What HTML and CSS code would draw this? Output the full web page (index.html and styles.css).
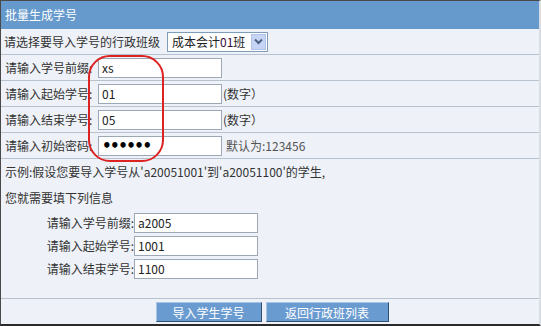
FILE: index.html
```html
<!DOCTYPE html>
<html lang="zh-CN">
<head>
    <meta charset="UTF-8">
    <title>批量生成学号</title>
    <link rel="stylesheet" href="styles.css">
</head>
<body>

    <div class="frame">
        <div class="title-bar">批量生成学号</div>
        <form id="batchForm">
            <div class="row">
                <label class="label-wide">请选择要导入学号的行政班级</label>
                <div class="fake-select">
                    <span class="fake-select-text">成本会计<span class="num">01</span>班</span>
                    <span class="fake-select-arrow">
                        <svg width="9" height="7" viewBox="0 0 9 7"><path d="M1 1.5 L4.5 5 L8 1.5" fill="none" stroke="#4d6185" stroke-width="2"/></svg>
                    </span>
                </div>
            </div>
            <div class="row">
                <label class="label" for="prefix">请输入学号前缀:</label>
                <input type="text" id="prefix" value="xs">
            </div>
            <div class="row">
                <label class="label" for="startNo">请输入起始学号:</label>
                <input type="text" id="startNo" class="num" value="01">
                <span class="hint">(数字）</span>
            </div>
            <div class="row">
                <label class="label" for="endNo">请输入结束学号:</label>
                <input type="text" id="endNo" class="num" value="05">
                <span class="hint">(数字）</span>
            </div>
            <div class="row">
                <label class="label" for="pwd">请输入初始密码:</label>
                <input type="password" id="pwd" value="123456">
                <span class="hint hint-gray">默认为:123456</span>
            </div>

            <div class="example">
                <p>示例:假设您要导入学号从'a20051001'到'a20051100'的学生,</p>
                <p>您就需要填下列信息</p>
                <div class="sample-grid">
                    <label>请输入学号前缀:</label>
                    <input type="text" value="a2005">
                    <label>请输入起始学号:</label>
                    <input type="text" class="num" value="1001">
                    <label>请输入结束学号:</label>
                    <input type="text" class="num" value="1100">
                </div>
            </div>

            <div class="button-row">
                <button type="submit" class="btn btn-import">导入学生学号</button>
                <button type="button" class="btn btn-back">返回行政班列表</button>
            </div>
        </form>

        <!-- 红色圈注 -->
        <div class="mark"></div>
    </div>

</body>
</html>
```

FILE: styles.css
```css
body {
    margin: 0;
    padding: 0;
    font-family: "Noto Sans CJK SC", "Noto Sans", sans-serif;
    font-size: 12px;
    color: #333;
    background-color: #f4f6f9;
}
.frame {
    position: relative;
    width: 541px;
    height: 326px;
    box-sizing: border-box;
    border-top: 1px solid #4a4a4a;
    border-left: 1px solid #4a4a4a;
    border-right: 2px solid #d8dde4;
    border-bottom: 2px solid #2a2a2a;
    background-color: #eef2f8;
    overflow: hidden;
}
.title-bar {
    height: 28px;
    line-height: 27px;
    padding-left: 4px;
    background-color: #6699cc;
    color: #fff;
    font-size: 12px;
}
.row {
    display: flex;
    align-items: center;
    height: 25px;
    border-bottom: 1px solid #b7c2ce;
    padding-left: 3px;
}
.label {
    width: 93px;
    padding-left: 1px;
}
.label-wide {
    width: 163px;
}
.row input,
.sample-grid input {
    box-sizing: border-box;
    width: 124px;
    height: 20px;
    padding: 0 0 0 3px;
    border: 1px solid #9da8b6;
    background-color: #fff;
    font-family: inherit;
    font-size: 12px;
    color: #222;
    outline: none;
}
.num {
    color: #3a0a3a;
}
/* 密码圆点加大 */
.row input[type="password"] {
    font-family: "DejaVu Sans", sans-serif;
    font-size: 15px;
    font-weight: bold;
    letter-spacing: -1.5px;
    color: #000;
}
.hint {
    margin-left: 1px;
}
.hint-gray {
    margin-left: 4px;
    color: #555;
}
.fake-select {
    display: flex;
    align-items: center;
    justify-content: space-between;
    box-sizing: border-box;
    width: 101px;
    height: 20px;
    border: 1px solid #7f9db9;
    background-color: #fff;
    padding: 0 1px 0 4px;
}
.fake-select-text {
    color: #222;
}
.fake-select-arrow {
    display: flex;
    align-items: center;
    justify-content: center;
    box-sizing: border-box;
    width: 15px;
    height: 16px;
    background-color: #c6d5f5;
    border: 1px solid #b0c2e6;
}
.example {
    height: 139px;
    border-bottom: 1px solid #b7c2ce;
    padding-left: 4px;
}
.example p {
    margin: 0;
    line-height: 26px;
}
.sample-grid {
    display: grid;
    grid-template-columns: 129px 124px;
    grid-auto-rows: 23px;
    align-items: center;
}
.sample-grid label {
    text-align: right;
}
.button-row {
    display: flex;
    justify-content: center;
    gap: 4px;
    padding-top: 3px;
    padding-left: 4px;
}
.btn {
    height: 20px;
    padding: 0;
    font-family: inherit;
    font-size: 12px;
    color: #fff;
    background-color: #6a9bd0;
    border: 1px solid;
    border-color: #a9c4e2 #2f4f73 #2f4f73 #a9c4e2;
    cursor: pointer;
}
.btn-import {
    width: 106px;
}
.btn-back {
    width: 123px;
}
.mark {
    position: absolute;
    left: 87px;
    top: 54px;
    width: 72px;
    height: 103px;
    border: 2px solid #dd2222;
    border-radius: 22px;
}
```
